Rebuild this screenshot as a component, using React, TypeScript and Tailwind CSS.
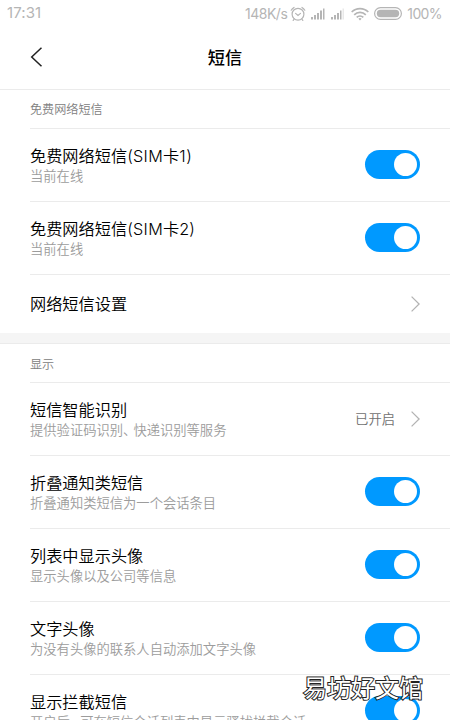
import type { ReactNode } from 'react'

type Item = {
  title: ReactNode
  desc?: ReactNode
  value?: string
  control: 'switch' | 'link'
}

const networkItems: Item[] = [
  {
    title: <>免费网络短信<span className="tracking-[0.3px]">(SIM</span>卡<span className="tracking-[0.8px]">1)</span></>,
    desc: '当前在线',
    control: 'switch',
  },
  {
    title: <>免费网络短信<span className="tracking-[0.3px]">(SIM</span>卡2)</>,
    desc: '当前在线',
    control: 'switch',
  },
  { title: '网络短信设置', control: 'link' },
]

const displayItems: Item[] = [
  {
    title: '短信智能识别',
    desc: <>提供验证码识别<span className="tracking-[-3px]">、</span>快递识别等服务</>,
    value: '已开启',
    control: 'link',
  },
  { title: '折叠通知类短信', desc: '折叠通知类短信为一个会话条目', control: 'switch' },
  { title: '列表中显示头像', desc: '显示头像以及公司等信息', control: 'switch' },
  { title: '文字头像', desc: '为没有头像的联系人自动添加文字头像', control: 'switch' },
  {
    title: '显示拦截短信',
    desc: <>开启后<span className="tracking-[-3px]">，</span>可在短信会话列表中显示骚扰拦截会话</>,
    control: 'switch',
  },
]

function StatusBar() {
  return (
    <div className="flex h-[26px] items-center justify-between pl-[7px] pr-2 pt-px text-[14px] text-[#b5b5b5]">
      <span className="text-[15px] tracking-[0.1px]">17:31</span>
      <div className="flex items-center">
        <span className="tracking-[-0.5px]">148K/s</span>
        <svg className="ml-[3px]" width="16" height="16" viewBox="0 0 16 16" fill="none" stroke="currentColor" strokeWidth="1.2" strokeLinecap="round">
          <circle cx="8" cy="8.2" r="5.9" />
          <path d="M1.2 4.2A8 8 0 0 1 4 1.4M12 1.4a8 8 0 0 1 2.8 2.8M5.6 7.4 8 9.4l2.5-2M4.2 13l-1 1.4M11.8 13l1 1.4" />
        </svg>
        <svg className="ml-[5px]" width="34" height="12" viewBox="0 0 34 12" fill="currentColor">
          <path d="M0 9h2v2.5H0zM3 7h2v4.5H3zM6 5h2v6.5H6zM9 2.5h2v9H9zM12 .5h1.5v11H12z" />
          <path d="M20 9h2v2.5h-2zM23 7h2v4.5h-2zM26 5h2v6.5h-2zM29 2.5h1.5v9H29z" />
          <path d="M31.5.5H33v11h-1.5z" opacity=".3" />
        </svg>
        <svg className="ml-1.5" width="18" height="14" viewBox="0 0 18 14" fill="none" stroke="currentColor" strokeWidth="1.7">
          <path d="M.7 5a11.8 11.8 0 0 1 16.6 0M3.2 7.8a8.2 8.2 0 0 1 11.6 0M5.7 10.4a4.7 4.7 0 0 1 6.6 0" />
          <path d="M7.4 11.7 9 13.5l1.6-1.8a2.4 2.4 0 0 0-3.2 0z" fill="currentColor" stroke="none" />
        </svg>
        <svg className="ml-[5px]" width="28" height="13" viewBox="0 0 28 13" fill="none" stroke="currentColor">
          <rect x=".6" y=".6" width="26.8" height="11.8" rx="5.9" strokeWidth="1.2" />
          <rect x="2.8" y="2.8" width="22.4" height="7.4" rx="3.7" fill="currentColor" stroke="none" />
        </svg>
        <span className="ml-[5px] tracking-[-0.6px]">100%</span>
      </div>
    </div>
  )
}

function Switch() {
  return (
    <button role="switch" aria-checked="true" className="flex h-[29px] w-[55px] shrink-0 items-center justify-end rounded-full bg-[#0099ff] pr-[3px]">
      <span className="h-[23px] w-[23px] rounded-full bg-white" />
    </button>
  )
}

function Chevron() {
  return (
    <svg className="shrink-0" width="9" height="16" viewBox="0 0 9 16" fill="none" stroke="#b3b3b3" strokeWidth="1.3">
      <path d="M.6.6 8.1 8 .6 15.4" />
    </svg>
  )
}

function Row({ item }: { item: Item }) {
  return (
    <div className={`flex shrink-0 items-center justify-between border-t border-[#ebebeb] pr-[30px] ${item.desc ? 'h-[73px] pb-px' : 'h-[59px]'}`}>
      <div className={`whitespace-nowrap ${item.desc ? 'pt-px' : ''}`}>
        <div className="text-[16.2px] font-[350] leading-[22px] text-black">{item.title}</div>
        {item.desc && <div className="text-[13.3px] font-[350] leading-[18px] text-[#9c9c9c]">{item.desc}</div>}
      </div>
      {item.control === 'switch' ? (
        <Switch />
      ) : (
        <div className="flex items-center gap-4">
          {item.value && <span className="pt-0.5 text-[13.3px] font-[350] text-[#707070]">{item.value}</span>}
          <Chevron />
        </div>
      )}
    </div>
  )
}

function Section({ label, items }: { label: string; items: Item[] }) {
  return (
    <section className="border-t border-[#ebebeb] bg-white pl-[30px]">
      <h2 className="flex h-[38px] items-center pt-[3px] text-[12.1px] font-[350] text-[#808080]">{label}</h2>
      {items.map((item, i) => (
        <Row key={i} item={item} />
      ))}
    </section>
  )
}

export default function App() {
  return (
    <div className="relative h-[720px] w-[450px] overflow-hidden bg-white font-[Inter,'Noto_Sans_CJK_SC',sans-serif]">
      <StatusBar />
      <header className="grid h-[63px] grid-cols-[30px_1fr_30px] items-center px-[30px] pb-px">
        <svg width="13" height="20" viewBox="0 0 13 20" fill="none" stroke="#222" strokeWidth="1.5">
          <path d="M11.5.8 1.7 10l9.8 9.2" />
        </svg>
        <h1 className="pt-px text-center text-[17.2px] font-medium text-black">短信</h1>
      </header>

      <Section label="免费网络短信" items={networkItems} />
      <div className="h-[10.4px] bg-[#f5f5f5]" />
      <Section label="显示" items={displayItems} />

      <div className="absolute left-[303px] top-[671px] whitespace-nowrap text-[24px] leading-[36px] text-white [-webkit-text-stroke:2px_#222] [paint-order:stroke_fill]">
        易坊好文馆
      </div>
    </div>
  )
}
